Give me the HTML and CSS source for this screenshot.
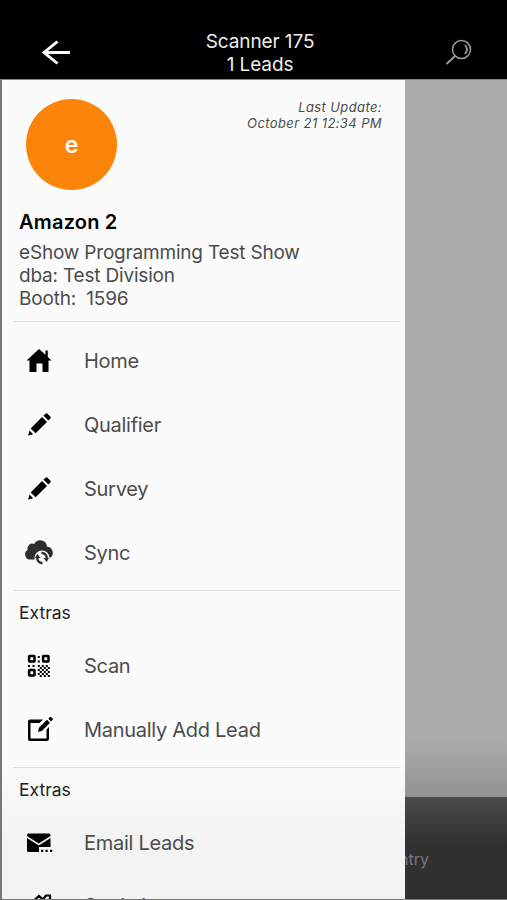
FILE: index.html
```html
<!DOCTYPE html>
<html lang="en">
<head>
  <meta charset="UTF-8">
  <title>Scanner 175</title>
  <link rel="stylesheet" href="styles.css">
</head>
<body>
  <div class="app">
    <header class="topbar">
      <svg class="back" width="30" height="26" viewBox="0 0 30 26">
        <path d="M29 13.500H3M16.500 2.500L3 13.500L16.500 24.500" fill="none" stroke="#fff" stroke-width="2.900"/>
      </svg>
      <div class="title">Scanner 175<br>1 Leads</div>
      <svg class="search" width="28" height="28" viewBox="0 0 28 28" fill="none" stroke="#999">
        <circle cx="16.500" cy="10.500" r="9" stroke-width="1.500"/>
        <path d="M10 17L1.500 25" stroke-width="2"/>
        <path d="M20 6Q24 10.500 20 15" stroke-width="1.800"/>
      </svg>
    </header>
    <div class="content">
      <nav class="drawer">
        <div class="profile">
          <div class="avatar">e</div>
          <div class="update">Last Update:<br>October 21 12:34 PM</div>
        </div>
        <div class="company">Amazon 2</div>
        <div class="info">eShow Programming Test Show<br>dba: Test Division<br>Booth:&nbsp; 1596</div>

        <div class="group first">
          <div class="item">
            <svg class="icon" width="30" height="30" viewBox="0 0 30 30">
              <path d="M15 3L2.500 14.500H5.500V26H12.500V17.500H18.500V26H24.500V14.500H27.500L23.800 11V4.500H21.500V8.800Z"/>
            </svg>
            <span>Home</span>
          </div>
          <div class="item">
            <svg class="icon" width="30" height="30" viewBox="0 0 30 30">
              <path d="M4.200 25.500L5.400 20.500L9.200 24.300ZM6.700 18.400L18 7.100L23 12L11.600 23.200ZM19.400 5.700L21.500 3.700Q22.500 2.700 23.500 3.700L26.300 6.500Q27.300 7.500 26.300 8.500L24.400 10.500Z"/>
            </svg>
            <span>Qualifier</span>
          </div>
          <div class="item">
            <svg class="icon" width="30" height="30" viewBox="0 0 30 30">
              <path d="M4.200 25.500L5.400 20.500L9.200 24.300ZM6.700 18.400L18 7.100L23 12L11.600 23.200ZM19.400 5.700L21.500 3.700Q22.500 2.700 23.500 3.700L26.300 6.500Q27.300 7.500 26.300 8.500L24.400 10.500Z"/>
            </svg>
            <span>Survey</span>
          </div>
          <div class="item">
            <svg class="icon" width="30" height="30" viewBox="0 0 30 30">
              <path d="M7 21.500A5.200 5.200 0 0 1 3.500 12A5 5 0 0 1 10.200 6A6.800 6.800 0 0 1 23 8.800A6 6 0 0 1 26.500 19.500L23 21.500Z" fill="#2f2c2e"/>
              <circle cx="18" cy="20" r="7.600" fill="#fbfbfb"/>
              <path d="M13.300 19.500A4.800 4.800 0 0 0 18.500 25M22.700 20.500A4.800 4.800 0 0 0 17.500 15" fill="none" stroke="#2f2c2e" stroke-width="2.400"/>
              <path d="M11 20L13.300 16L16.500 20ZM25 20L22.700 24L19.500 20Z" fill="#2f2c2e"/>
            </svg>
            <span>Sync</span>
          </div>
        </div>

        <div class="group">
          <div class="heading">Extras</div>
          <div class="item">
            <svg class="icon" width="30" height="30" viewBox="0 0 30 30">
              <g fill="none" stroke="#000" stroke-width="2.500">
                <rect x="5.100" y="5.100" width="5.400" height="5.400" rx=".5"/>
                <rect x="19.100" y="5.100" width="5.400" height="5.400" rx=".5"/>
                <rect x="5.100" y="19.100" width="5.400" height="5.400" rx=".5"/>
              </g>
              <path d="M13.800 5h2v2h-2zM13.800 9.500h2v2h-2zM4 14h2v2h-2zM8.500 14h2v2h-2zM13.800 14h2v2h-2zM17.800 14h2v2h-2zM21.800 14h2v2h-2zM15.800 16h2v2h-2zM19.800 16h2v2h-2zM23.800 16h2v2h-2zM13.800 18h2v2h-2zM17.800 18h2v2h-2zM21.800 18h2v2h-2zM15.800 20h2v2h-2zM19.800 20h2v2h-2zM23.800 20h2v2h-2zM13.800 22h2v2h-2zM17.800 22h2v2h-2zM21.800 22h2v2h-2zM15.800 24h2v2h-2zM19.800 24h2v2h-2zM23.800 24h2v2h-2z"/>
            </svg>
            <span>Scan</span>
          </div>
          <div class="item">
            <svg class="icon" width="30" height="30" viewBox="0 0 30 30">
              <path d="M19 4.500H6Q4 4.500 4 6.500V24Q4 26 6 26H23Q25 26 25 24V12L22.500 14.500V23.500H6.500V8H15.500Z"/>
              <path d="M14 17L14.800 13L23 4.800L26 7.800L17.800 16ZM24.300 3.800L26 2.100Q26.600 1.600 27.200 2.200L28.600 3.600Q29.200 4.200 28.600 4.800L27 6.500Z"/>
            </svg>
            <span>Manually Add Lead</span>
          </div>
        </div>

        <div class="group">
          <div class="heading">Extras</div>
          <div class="item">
            <svg class="icon" width="30" height="30" viewBox="0 0 30 30">
              <path d="M3 8V7Q3 5.500 4.500 5.500H25Q26.500 5.500 26.500 7V8L14.800 15.500ZM3 10L14.800 17.500L26.500 10V19H15V24H4.500Q3 24 3 22.500Z"/>
              <path d="M17 21.800h2.200V24H17zM21.500 21.800h2.200V24h-2.200zM26 21.800h2.200V24H26z"/>
            </svg>
            <span>Email Leads</span>
          </div>
          <div class="item">
            <svg class="icon" width="30" height="30" viewBox="0 0 30 30">
              <path d="M10.500 9L15 5L19 8.500L22 4.500M21.500 4.500H26V8" fill="none" stroke="#000" stroke-width="2.200"/>
            </svg>
            <span>Statistics</span>
          </div>
        </div>
      </nav>
      <div class="backdrop">
        <div class="tab">ntry</div>
      </div>
    </div>
  </div>
</body>
</html>
```

FILE: styles.css
```css
body {
  margin: 0;
  font-family: Inter, "Liberation Sans", sans-serif;
  color: #4c4c4c;
}
.app {
  width: 507px;
  height: 900px;
  overflow: hidden;
  box-sizing: border-box;
  border-bottom: 1px solid #777;
}
.topbar {
  height: 79px;
  box-sizing: border-box;
  padding: 30px 34px 0 41px;
  display: flex;
  background-color: #000;
}
.back {
  margin-top: 9px;
}
.search {
  margin-top: 9px;
}
.title {
  flex: 1;
  padding-left: 4px;
  color: #eee;
  font-size: 19px;
  line-height: 23px;
  letter-spacing: -0.1px;
  text-align: center;
}
.content {
  display: flex;
  height: 821px;
  box-sizing: border-box;
  border-top: 1px solid #888;
}
.drawer {
  width: 405px;
  height: 820px;
  overflow: hidden;
  box-sizing: border-box;
  border-left: 2px solid #777;
  background: linear-gradient(#fbfbfb 680px, #f3f3f3 760px);
}
.profile {
  display: flex;
  justify-content: space-between;
  height: 130px;
  box-sizing: border-box;
  padding: 19px 23px 0 24px;
}
.avatar {
  width: 91px;
  height: 91px;
  border-radius: 50%;
  background-color: #fc8409;
  color: #fff;
  font-size: 23px;
  font-weight: 600;
  line-height: 92px;
  text-align: center;
}
.update {
  font-size: 13px;
  font-style: italic;
  line-height: 16px;
  letter-spacing: 0.4px;
  text-align: right;
}
.company {
  padding-left: 17px;
  color: #000;
  font-size: 20px;
  font-weight: 600;
  line-height: 24px;
  letter-spacing: 0.2px;
}
.info {
  padding: 7px 0 11px 17px;
  font-size: 19px;
  line-height: 23px;
  letter-spacing: -0.19px;
}
.group {
  margin: 0 5px 0 11px;
  padding-bottom: 5px;
  border-top: 1px solid #dedede;
}
.first {
  padding-top: 7px;
}
.heading {
  height: 43px;
  padding-left: 6px;
  color: #222;
  font-size: 17.500px;
  line-height: 44px;
}
.item {
  display: flex;
  align-items: center;
  height: 64px;
  padding-left: 11px;
  font-size: 20px;
  letter-spacing: -0.28px;
}
.icon {
  margin-right: 30px;
}
.group:last-child .item:last-child {
  height: 62px;
}
.backdrop {
  flex: 1;
  overflow: hidden;
  background: linear-gradient(#ababab 660px, #929292 717px, #4b4b4b 717px, #303030 765px);
}
.tab {
  width: 80px;
  margin-top: 768px;
  margin-left: -6px;
  color: #777;
  font-size: 16px;
  line-height: 22px;
}
```
